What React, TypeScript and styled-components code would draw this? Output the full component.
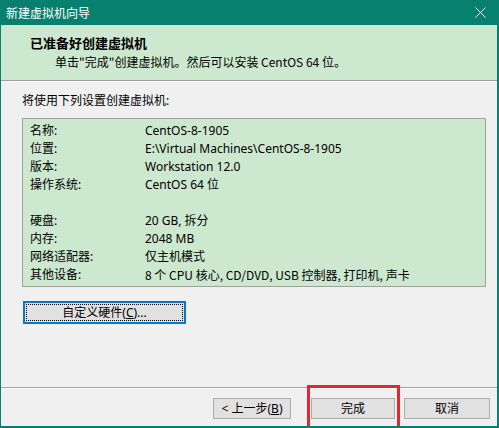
import React from 'react'
import styled, { createGlobalStyle } from 'styled-components'

const GlobalStyle = createGlobalStyle`
  html, body {
    margin: 0;
    padding: 0;
    overflow: hidden;
    background: #f0f0f0;
  }
  body {
    font-family: 'Noto Sans', 'Noto Sans CJK SC', sans-serif;
    font-size: 12px;
    color: #000;
  }
`

// mixed rows are drawn by the CJK font, its latin letters run narrower
const settings: { label: string; value: string; mixed?: boolean }[] = [
  { label: '名称:', value: 'CentOS-8-1905' },
  { label: '位置:', value: 'E:\\Virtual Machines\\CentOS-8-1905' },
  { label: '版本:', value: 'Workstation 12.0' },
  { label: '操作系统:', value: 'CentOS 64 位' },
  { label: '', value: '' },
  { label: '硬盘:', value: '20 GB, 拆分' },
  { label: '内存:', value: '2048 MB' },
  { label: '网络适配器:', value: '仅主机模式' },
  { label: '其他设备:', value: '8 个 CPU 核心, CD/DVD, USB 控制器, 打印机, 声卡', mixed: true }
]

const App = () => {
  return (
    <>
      <GlobalStyle />
      <Window>
        <TitleBar>
          <span>新建虚拟机向导</span>
          <CloseIcon width='11' height='11' viewBox='0 0 11 11'>
            <path d='M0.5 0.5 L10.5 10.5 M10.5 0.5 L0.5 10.5' stroke='#fff' strokeWidth='1' />
          </CloseIcon>
        </TitleBar>

        <Header>
          <HeaderTitle>已准备好创建虚拟机</HeaderTitle>
          <HeaderSub>单击"完成"创建虚拟机。然后可以安装 CentOS 64 位。</HeaderSub>
        </Header>

        <Body>
          <Intro>将使用下列设置创建虚拟机:</Intro>
          <SummaryBox>
            {settings.map((s, i) => (
              <Row key={i}>
                <span>{s.label}</span>
                <Value $mixed={s.mixed}>{s.value}</Value>
              </Row>
            ))}
          </SummaryBox>
          <CustomButton>
            <FocusRing>
              自定义硬件(<u>C</u>)...
            </FocusRing>
          </CustomButton>
        </Body>

        <Footer>
          <Button $width={78}>
            &lt; 上一步(<u>B</u>)
          </Button>
          <Highlighted>
            <Button $width={84}>完成</Button>
            <RedMark />
          </Highlighted>
          <Button $width={86}>取消</Button>
        </Footer>
      </Window>
    </>
  )
}

const Window = styled.div`
  width: 499px;
  height: 428px;
  box-sizing: border-box;
  border-left: 1px solid #08806f;
  border-right: 2px solid #08806f;
  border-bottom: 2px solid #08806f;
  background: #f0f0f0;
  display: flex;
  flex-direction: column;
  overflow: hidden;
`

const TitleBar = styled.div`
  height: 25px;
  flex-shrink: 0;
  background: #08806f;
  color: #fff;
  display: flex;
  align-items: center;
  justify-content: space-between;
  padding: 0 11px 0 5px;
  font-size: 12px;
`

const CloseIcon = styled.svg`
  display: block;
`

const Header = styled.div`
  height: 56px;
  flex-shrink: 0;
  box-sizing: border-box;
  background: #cce8cf;
  border-bottom: 1px solid #a0a0a0;
  box-shadow: 0 1px 0 #ffffff;
  padding: 9px 0 0 29px;
  display: flex;
  flex-direction: column;
`

const HeaderTitle = styled.div`
  font-family: 'Noto Sans CJK SC', sans-serif;
  font-weight: bold;
  font-size: 13px;
  line-height: 17px;
`

const HeaderSub = styled.div`
  font-family: 'Noto Sans CJK SC', sans-serif;
  padding-left: 25px;
  line-height: 16px;
  margin-top: 3px;
`

const Body = styled.div`
  flex: 1;
  margin-top: 1px;
  padding: 10px 11px 0 21px;
  display: flex;
  flex-direction: column;
  align-items: flex-start;
  border-bottom: 1px solid #a0a0a0;
  box-shadow: 0 1px 0 #ffffff;
`

const Intro = styled.div`
  line-height: 18px;
`

const SummaryBox = styled.div`
  align-self: stretch;
  margin-top: 8px;
  background: #cce8cf;
  border: 1px solid #a0a0a0;
  padding: 3px 0 2px 7px;
  display: flex;
  flex-direction: column;
`

const Row = styled.div`
  display: grid;
  grid-template-columns: 115px 1fr;
  height: 18px;
  line-height: 18px;
  white-space: nowrap;
`

const Value = styled.span<{ $mixed?: boolean }>`
  font-family: ${(p) => (p.$mixed ? "'Noto Sans CJK SC', sans-serif" : 'inherit')};
`

const CustomButton = styled.div`
  margin: 14px 0 0 1px;
  width: 163px;
  height: 23px;
  box-sizing: border-box;
  border: 2px solid #0078d7;
  background: #e1e1e1;
  padding: 1px;
  display: flex;
`

const FocusRing = styled.div`
  flex: 1;
  border: 1px dotted #000;
  display: flex;
  align-items: center;
  justify-content: center;
  line-height: 16px;
`

const Footer = styled.div`
  height: 38px;
  flex-shrink: 0;
  display: flex;
  justify-content: flex-end;
  align-items: flex-start;
  padding: 10px 7px 0 0;
  box-sizing: border-box;
  gap: 9px;
`

const Highlighted = styled.div`
  position: relative;
  margin-left: 11px;
`

const Button = styled.div<{ $width: number }>`
  width: ${(p) => p.$width}px;
  height: 21px;
  box-sizing: border-box;
  border: 1px solid #adadad;
  background: #e1e1e1;
  display: flex;
  align-items: center;
  justify-content: center;
  line-height: 16px;
`

const RedMark = styled.div`
  position: absolute;
  top: -13px;
  left: -4px;
  right: -5px;
  bottom: -20px;
  border: 3px solid #e3262f;
  pointer-events: none;
`

export default App
